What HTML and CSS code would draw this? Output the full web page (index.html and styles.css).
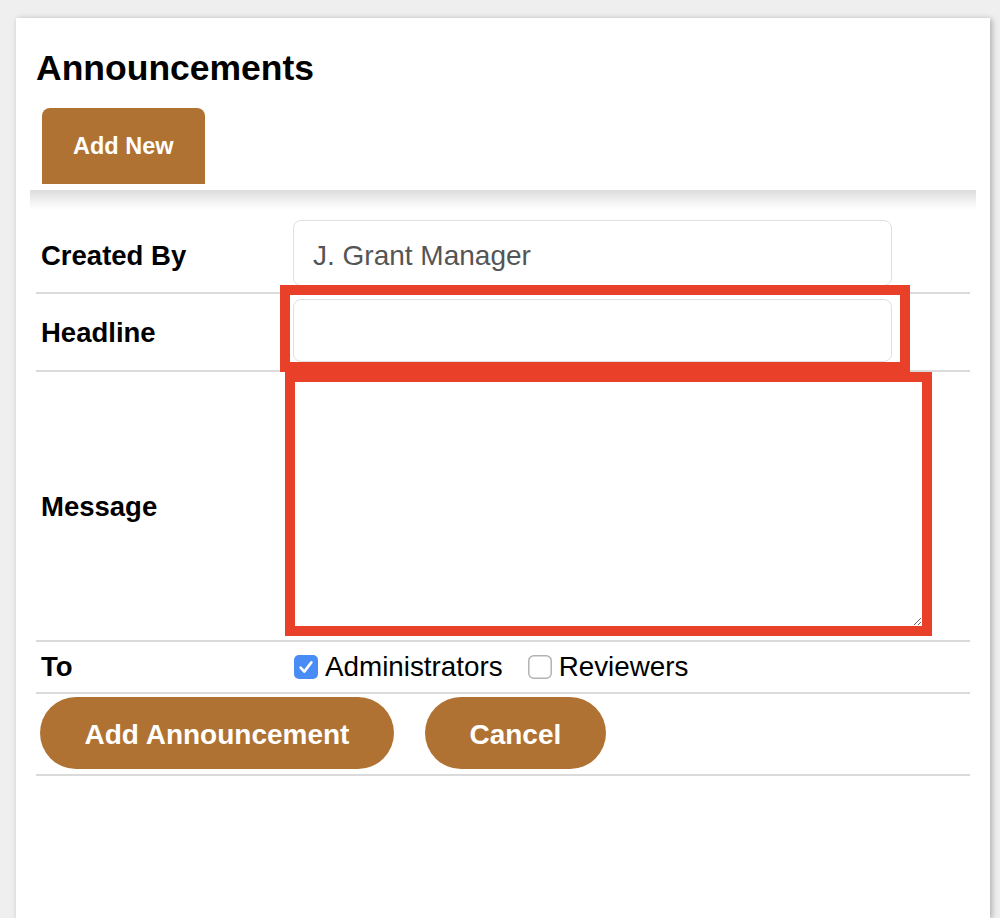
FILE: index.html
```html
<!DOCTYPE html>
<html lang="en">
<head>
<meta charset="utf-8">
<title>Announcements</title>
<link rel="stylesheet" href="styles.css">
</head>
<body>
<div class="card">
  <h1 class="title">Announcements</h1>
  <div class="tabs">
    <div class="tab">Add New</div>
  </div>
  <div class="band"></div>
  <div class="form">
    <div class="row row-created">
      <div class="label">Created By</div>
      <div class="field">
        <input class="text-input" type="text" value="J. Grant Manager" readonly>
      </div>
    </div>
    <div class="row row-headline">
      <div class="label">Headline</div>
      <div class="field">
        <span class="hl-wrap"><input class="text-input" type="text" value=""></span>
      </div>
    </div>
    <div class="row row-message">
      <div class="label">Message</div>
      <div class="field">
        <textarea class="message"></textarea>
      </div>
    </div>
    <div class="row row-to">
      <div class="label">To</div>
      <div class="field checks">
        <label class="check">
          <svg class="box" width="24" height="24" viewBox="0 0 24 24"><rect x="0" y="0" width="24" height="24" rx="5" fill="#4a8cf6"/><path d="M6.6 12.6 L10.3 16.6 L17.4 7.4" fill="none" stroke="#fff" stroke-width="2.6" stroke-linecap="round" stroke-linejoin="round"/></svg>
          <span>Administrators</span>
        </label>
        <label class="check">
          <svg class="box" width="24" height="24" viewBox="0 0 24 24"><rect x="0.75" y="0.75" width="22.5" height="22.5" rx="5" fill="#fff" stroke="#b3b3b3" stroke-width="1.5"/></svg>
          <span>Reviewers</span>
        </label>
      </div>
    </div>
    <div class="row row-buttons">
      <button class="btn" type="button">Add Announcement</button>
      <button class="btn" type="button">Cancel</button>
    </div>
  </div>
</div>
</body>
</html>
```
FILE: styles.css
```css
html, body {
  margin: 0;
  padding: 0;
  background: #efefef;
  overflow: hidden;
}
body {
  font-family: "Liberation Sans", Arial, Helvetica, sans-serif;
  color: #000;
  padding: 18px 10px 0 16px;
}
.card {
  background: #fff;
  min-height: 900px;
  padding: 0 14px;
  box-shadow: 2px 1px 6px rgba(0, 0, 0, 0.28);
}
.title {
  margin: 0;
  padding: 30px 0 0 6px;
  font-size: 35.5px;
  line-height: 40px;
  font-weight: bold;
}
.tabs {
  display: flex;
  margin-top: 20px;
  padding-left: 12px;
}
.tab {
  height: 76px;
  display: flex;
  align-items: center;
  padding: 0 31px;
  background: #b07232;
  color: #fff;
  font-size: 23.5px;
  font-weight: bold;
  border-radius: 8px 8px 0 0;
}
.band {
  margin-top: 6px;
  height: 20px;
  background: linear-gradient(to bottom, #dcdcdc 0%, #f3f3f3 60%, #fff 100%);
}
.form {
  margin: 0 6px;
}
.row {
  display: flex;
  align-items: center;
  border-bottom: 2px solid #dadada;
  box-sizing: border-box;
}
.label {
  width: 257px;
  flex: none;
  box-sizing: border-box;
  padding-left: 5px;
  padding-top: 5px;
  font-size: 27.5px;
  font-weight: bold;
}
.row-to .label {
  padding-top: 0;
}
.field {
  flex: 1;
  display: flex;
  align-items: center;
}
.row-created {
  height: 84px;
  padding-top: 11px;
  padding-bottom: 7px;
}
.row-headline {
  height: 78px;
  padding-top: 4px;
  padding-bottom: 8px;
}
.text-input {
  display: block;
  width: 599px;
  height: 66px;
  box-sizing: border-box;
  border: 1.5px solid #e0e0e0;
  border-radius: 8px;
  padding: 5px 19px 0;
  font-family: "Liberation Sans", Arial, Helvetica, sans-serif;
  font-size: 28px;
  color: #555;
  background: #fff;
  outline: none;
  margin: 0;
}
.hl-wrap {
  position: relative;
  display: block;
}
.hl-wrap .text-input {
  height: 63px;
}
.hl-wrap::after {
  content: "";
  position: absolute;
  left: -13px;
  top: -14px;
  right: -18px;
  bottom: -10px;
  border: 10px solid #e9402a;
  pointer-events: none;
}
.row-message {
  height: 270px;
  padding-bottom: 4px;
  align-items: flex-start;
}
.row-message .label {
  align-self: center;
}
.message {
  display: block;
  width: 647px;
  height: 264px;
  margin: 0 0 0 -8px;
  box-sizing: border-box;
  border: 10px solid #e9402a;
  border-radius: 0;
  padding: 0;
  background: #fff;
  outline: none;
  resize: both;
  font-family: "Liberation Sans", Arial, Helvetica, sans-serif;
}
.row-to {
  height: 52px;
}
.checks {
  gap: 25px;
  padding-left: 1px;
}
.check {
  display: flex;
  align-items: center;
  gap: 7px;
  font-size: 27.8px;
}
.box {
  display: block;
  flex: none;
}
.row-buttons {
  height: 82px;
  padding: 4px 0 6px 4px;
  gap: 31px;
}
.btn {
  height: 72px;
  padding: 4px 44.5px 0;
  border: none;
  border-radius: 36px;
  background: #b07232;
  color: #fff;
  font-family: "Liberation Sans", Arial, Helvetica, sans-serif;
  font-size: 28px;
  font-weight: bold;
  cursor: pointer;
}
```
